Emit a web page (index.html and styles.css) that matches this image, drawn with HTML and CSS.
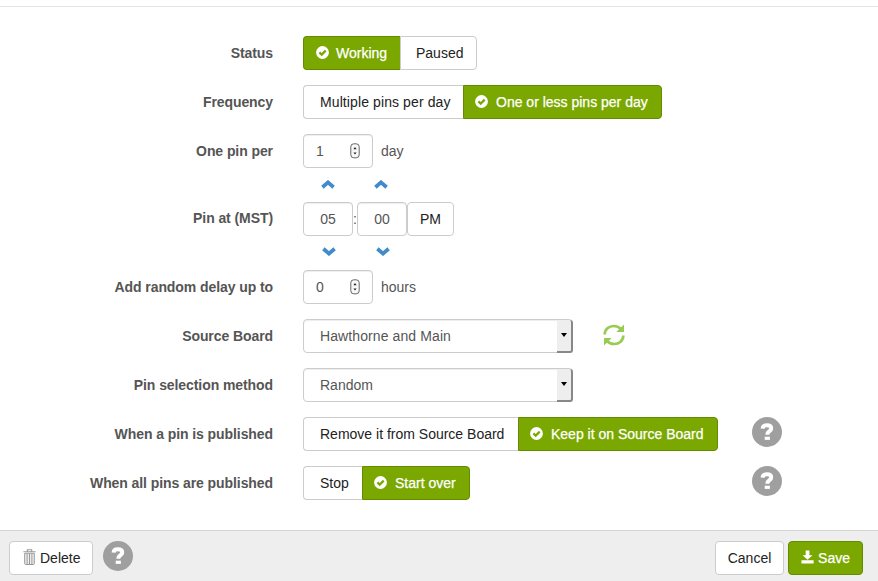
FILE: index.html
```html
<!DOCTYPE html>
<html lang="en">
<head>
<meta charset="utf-8">
<title>Pin schedule</title>
<link rel="stylesheet" href="styles.css">
</head>
<body>
<svg class="defs" width="0" height="0">
  <symbol id="check" viewBox="0 0 13 13"><circle cx="6.5" cy="6.5" r="6.4" fill="#fff"/><path d="M3.4 6.4 5.7 8.6 9.7 4.6" fill="none" stroke="#7aa800" stroke-width="2.2"/></symbol>
  <symbol id="up" viewBox="0 0 14 9"><path d="M1.4 7.2 7 2.4l5.6 4.8" fill="none" stroke="#428bca" stroke-width="3.8"/></symbol>
  <symbol id="down" viewBox="0 0 14 9"><path d="M1.4 1.8 7 6.6l5.6-4.8" fill="none" stroke="#428bca" stroke-width="3.8"/></symbol>
  <symbol id="stepper" viewBox="0 0 10 16"><rect x=".8" y=".8" width="8.4" height="14" rx="3" fill="#f8f8f8" stroke="#666"/><path d="M3.4 6.2 5 4l1.6 2.2zM3.4 9.4 5 11.6l1.6-2.2z" fill="#222"/></symbol>
  <symbol id="help" viewBox="0 0 30 30"><circle cx="15" cy="15" r="15" fill="#9f9f9f"/><path d="M10.6 11.7C10.7 9.3 12.2 8.3 14.8 8.3c2.7 0 4.4 1 4.4 3.1 0 2.9-3.9 2.6-3.9 6.3" fill="none" stroke="#fff" stroke-width="4"/><path d="M12.7 19.7h5.2v3.2h-5.2z" fill="#fff"/></symbol>
</svg>
<main class="form">
  <div class="row"><label class="label">Status</label>
    <div class="group"><button class="btn on w98"><svg class="check"><use href="#check"/></svg><span>Working</span></button><button class="btn w77">Paused</button></div></div>
  <div class="row"><label class="label">Frequency</label>
    <div class="group"><button class="btn spaced w161">Multiple pins per day</button><button class="btn on w199"><svg class="check"><use href="#check"/></svg><span>One or less pins per day</span></button></div></div>
  <div class="row"><label class="label">One pin per</label>
    <div class="control"><div class="field number"><span>1</span><svg class="stepper"><use href="#stepper"/></svg></div><span class="unit">day</span></div></div>
  <div class="row time-row"><label class="label">Pin at (MST)</label>
    <div class="time">
      <svg class="arrow"><use href="#up"/></svg><i></i><svg class="arrow"><use href="#up"/></svg><i></i>
      <div class="field part">05</div><span class="colon">:</span><div class="field part">00</div><button class="btn pm">PM</button>
      <svg class="arrow low"><use href="#down"/></svg><i></i><svg class="arrow low"><use href="#down"/></svg><i></i>
    </div></div>
  <div class="row"><label class="label">Add random delay up to</label>
    <div class="control"><div class="field number"><span>0</span><svg class="stepper"><use href="#stepper"/></svg></div><span class="unit">hours</span></div></div>
  <div class="row"><label class="label">Source Board</label>
    <div class="control"><div class="field select spaced"><span>Hawthorne and Main</span><b class="drop"></b></div>
    <svg class="refresh" viewBox="0 0 22 22"><g fill="none" stroke="#97cb52" stroke-width="2.7"><path d="M1.7 10.5C1.7 5 6 2 10.8 2c3.2 0 5.6 1.2 7.4 3.4"/><path d="M20.3 11.5C20.3 17 16 20 11.2 20c-3.2 0-5.6-1.2-7.4-3.4"/></g><path d="M21 .5v7.6h-7.7zM1 21.5v-7.6h7.7z" fill="#97cb52"/></svg></div></div>
  <div class="row"><label class="label">Pin selection method</label>
    <div class="control"><div class="field select"><span>Random</span><b class="drop"></b></div></div></div>
  <div class="row"><label class="label">When a pin is published</label>
    <div class="group"><button class="btn w216">Remove it from Source Board</button><button class="btn on w200"><svg class="check"><use href="#check"/></svg><span>Keep it on Source Board</span></button></div><svg class="help"><use href="#help"/></svg></div>
  <div class="row"><label class="label">When all pins are published</label>
    <div class="group"><button class="btn w60">Stop</button><button class="btn on w108"><svg class="check"><use href="#check"/></svg><span>Start over</span></button></div><svg class="help"><use href="#help"/></svg></div>
</main>
<footer class="footer">
  <button class="btn delete"><svg class="trash" viewBox="0 0 13 16"><path d="M4.3 2.4V.8h4.4v1.6M.4 2.8h12.2" fill="none" stroke="#999" stroke-width="1.1"/><path d="M1.7 4.3h9.6v10.2q0 1-1 1H2.7q-1 0-1-1zM4.1 5v10M6.5 5v10M8.9 5v10" fill="#eee" stroke="#999"/></svg><span>Delete</span></button>
  <svg class="help"><use href="#help"/></svg>
  <button class="btn cancel">Cancel</button>
  <button class="btn on save"><svg class="download" viewBox="0 0 14 14"><path d="M5 0h4v5h3.3L7 10 1.7 5H5zM.5 10.5h13V14H.5z" fill="#fff"/></svg><span>Save</span></button>
</footer>
</body>
</html>
```
FILE: styles.css
```css
* { box-sizing: border-box; }
body {
  margin: 0;
  height: 581px;
  overflow: hidden;
  background: #fff;
  color: #555;
  font: 14px/20px "Liberation Sans", Arial, sans-serif;
  display: flex;
  flex-direction: column;
}
.defs { position: absolute; }
.form {
  margin-top: 6px;
  height: 524px;
  flex: none;
  border-top: 1px solid #e5e5e5;
  padding-top: 29px;
  display: flex;
  flex-direction: column;
  gap: 15px;
}
.row { display: flex; height: 34px; flex: none; }
.label { width: 273px; margin-right: 30px; line-height: 34px; text-align: right; font-weight: bold; white-space: nowrap; letter-spacing: -.08px; }
.group { display: flex; width: 449px; }
.control { display: flex; }
.btn {
  height: 34px;
  margin: 0;
  padding: 0 12px 0 16px;
  display: flex;
  align-items: center;
  border: 1px solid #ccc;
  border-radius: 4px;
  background: #fff;
  color: #222;
  font: inherit;
  white-space: nowrap;
}
.spaced { letter-spacing: .1px; }
.on { background: #7aa800; border-color: #648c00; color: #fff; padding-left: 11px; -webkit-text-stroke: .25px #fff; }
.group .btn:first-child { border-radius: 4px 0 0 4px; }
.group .btn:last-child { border-radius: 0 4px 4px 0; }
.group .btn:first-child:not(.on) { border-right: 0; }
.group .btn.on:first-child { padding-left: 12px; border-right: 0; }
.group .on + .btn { padding-left: 15px; }
.check { width: 13px; height: 13px; margin: -1px 8px 0 0; flex: none; }
.w98 { width: 97px; }
.w98 .check { margin-right: 7px; }
.w77 { width: 77px; }
.w161 { width: 160px; }
.w199 { width: 199px; }
.w216 { width: 215px; }
.w200 { width: 200px; }
.w60 { width: 59px; }
.w108 { width: 108px; }
.field {
  height: 34px;
  border: 1px solid #ccc;
  border-radius: 4px;
  background: #fff;
  box-shadow: inset 0 1px 1px rgba(0,0,0,.075);
  display: flex;
  align-items: center;
}
.number { width: 70px; padding: 0 12px; justify-content: space-between; }
.stepper { width: 10px; height: 16px; }
.unit { margin-left: 8px; line-height: 34px; }
.time-row { height: 72px; }
.time-row .label { line-height: 20px; padding-top: 25px; }
.time { display: grid; height: 72px; grid-template: 19px 34px 19px / 50px 4px 50px 47px; }
.arrow { width: 14px; height: 9px; margin: -3px 0 0 18px; }
.arrow:nth-child(3) { margin-left: 17px; }
.arrow.low { margin: 11px 0 0 19px; }
.part { justify-content: center; }
.colon { line-height: 34px; text-align: center; }
.pm { padding: 0; justify-content: center; }
.select { width: 270px; padding-left: 16px; justify-content: space-between; }
.drop {
  width: 16px;
  height: 33px;
  margin-right: -1px;
  border-right: 2px solid #888;
  border-bottom: 2px solid #888;
  border-radius: 0 3px 3px 0;
  background: #eee;
  display: flex;
  align-items: center;
  justify-content: center;
}
.drop::after { content: ""; border: 3.5px solid transparent; border-top: 4px solid #000; border-bottom: 0; }
.refresh { width: 22px; height: 22px; margin: 5px 0 0 30px; }
.help { width: 30px; height: 30px; flex: none; }
.footer {
  flex: 1;
  border-top: 1px solid #d5d5d5;
  background: #eee;
  padding: 10px 15px 0 9px;
  display: flex;
  align-items: flex-start;
}
.delete { width: 84px; padding: 0 0 0 13px; }
.trash { width: 13px; height: 16px; margin: -2px 4px 0 0; }
.footer .help { margin-left: 10px; }
.cancel { width: 69px; margin: 0 4px 0 auto; padding: 0; justify-content: center; }
.save { width: 75px; padding-left: 12px; }
.download { width: 14px; height: 14px; margin: -2px 4px 0 0; }
```
